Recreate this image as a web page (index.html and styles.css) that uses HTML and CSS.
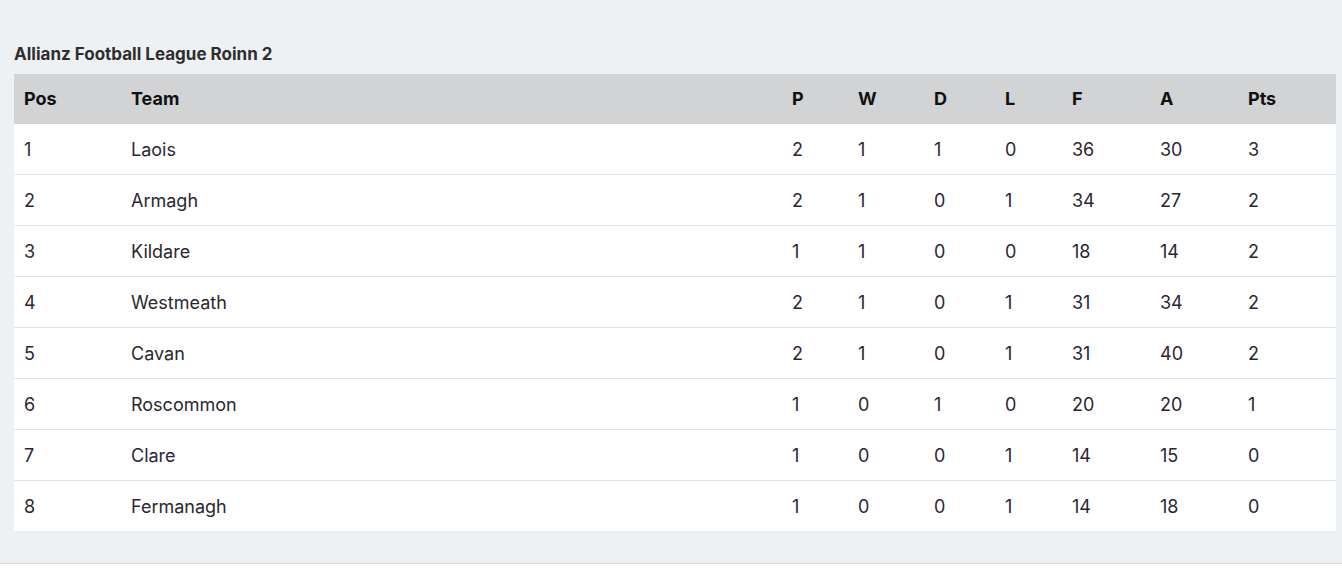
FILE: index.html
```html
<!DOCTYPE html>
<html lang="en">

<head>
  <meta charset="UTF-8" />
  <meta name="viewport" content="width=device-width, initial-scale=1.0" />
  <title>League Table</title>
  <link rel="stylesheet" href="styles.css">
</head>

<body>
  <div class="standings">
    <h2 class="league-title">Allianz Football League Roinn 2</h2>
    <table class="league-table">
      <thead>
        <tr>
          <th class="col-pos">Pos</th>
          <th class="col-team">Team</th>
          <th class="col-p">P</th>
          <th class="col-w">W</th>
          <th class="col-d">D</th>
          <th class="col-l">L</th>
          <th class="col-f">F</th>
          <th class="col-a">A</th>
          <th class="col-pts">Pts</th>
        </tr>
      </thead>
      <tbody>
        <tr><td>1</td><td>Laois</td><td>2</td><td>1</td><td>1</td><td>0</td><td>36</td><td>30</td><td>3</td></tr>
        <tr><td>2</td><td>Armagh</td><td>2</td><td>1</td><td>0</td><td>1</td><td>34</td><td>27</td><td>2</td></tr>
        <tr><td>3</td><td>Kildare</td><td>1</td><td>1</td><td>0</td><td>0</td><td>18</td><td>14</td><td>2</td></tr>
        <tr><td>4</td><td>Westmeath</td><td>2</td><td>1</td><td>0</td><td>1</td><td>31</td><td>34</td><td>2</td></tr>
        <tr><td>5</td><td>Cavan</td><td>2</td><td>1</td><td>0</td><td>1</td><td>31</td><td>40</td><td>2</td></tr>
        <tr><td>6</td><td>Roscommon</td><td>1</td><td>0</td><td>1</td><td>0</td><td>20</td><td>20</td><td>1</td></tr>
        <tr><td>7</td><td>Clare</td><td>1</td><td>0</td><td>0</td><td>1</td><td>14</td><td>15</td><td>0</td></tr>
        <tr><td>8</td><td>Fermanagh</td><td>1</td><td>0</td><td>0</td><td>1</td><td>14</td><td>18</td><td>0</td></tr>
      </tbody>
    </table>
  </div>
</body>

</html>
```

FILE: styles.css
```css
body {
  margin: 0;
  font-family: Inter, "Liberation Sans", sans-serif;
  color: #2c2632;
}

.standings {
  background: #eef1f4;
  padding: 44px 6px 32px 14px;
  border-bottom: 1px solid #d9dbdd;
}

.league-title {
  margin: 0 0 9px;
  font-size: 17px;
  font-weight: 700;
  line-height: 21px;
  color: #2e2e2e;
}

.league-table {
  width: 100%;
  border-collapse: collapse;
  table-layout: fixed;
  background: #fff;
  font-size: 18px;
}

.league-table th {
  box-sizing: border-box;
  background: #d1d3d5;
  height: 50px;
  padding: 0 10px 2px;
  text-align: left;
  font-weight: 700;
  color: #111;
}

.league-table td {
  height: 50px;
  padding: 0 10px;
  border-top: 1px solid #e3e5e7;
}

.league-table tbody tr:first-child td {
  border-top: none;
}

.col-pos { width: 107px; }
.col-p { width: 66px; }
.col-w { width: 76px; }
.col-d { width: 71px; }
.col-l { width: 67px; }
.col-f { width: 88px; }
.col-a { width: 88px; }
.col-pts { width: 98px; }
```
